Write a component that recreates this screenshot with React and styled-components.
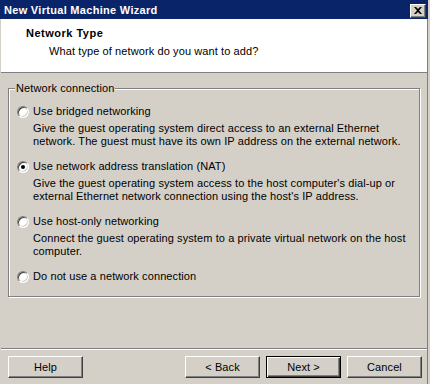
import { useState } from 'react';
import styled, { createGlobalStyle } from 'styled-components';

const GlobalStyle = createGlobalStyle`
  html, body {
    margin: 0;
    padding: 0;
    background: #d4d0c8;
  }
  body {
    font-family: "Liberation Sans", Arial, sans-serif;
    font-size: 11px;
    letter-spacing: 0.1px;
    color: #000;
  }
  * {
    box-sizing: border-box;
  }
`;

const Window = styled.div`
  width: 430px;
  height: 384px;
  padding-right: 2px;
  background: #d4d0c8;
  display: flex;
  flex-direction: column;
  overflow: hidden;
`;

const TitleBar = styled.div`
  height: 19px;
  flex: none;
  background: #0a246a;
  color: #fff;
  font-weight: 700;
  letter-spacing: 0.3px;
  line-height: 13px;
  display: flex;
  align-items: center;
  justify-content: space-between;
  padding: 2px 2px 0 4px;
`;

const CloseButton = styled.button`
  width: 16px;
  height: 14px;
  padding: 0;
  display: flex;
  align-items: center;
  justify-content: center;
  background: #d4d0c8;
  border: 1px solid;
  border-color: #fff #404040 #404040 #fff;
  box-shadow: inset -1px -1px #808080;
`;

const Client = styled.div`
  flex: 1;
  display: flex;
  flex-direction: column;
  border-left: 1px solid #d4d0c8;
  border-right: 1px solid #808080;
`;

const Header = styled.div`
  flex: none;
  background: #fff;
  padding: 8px 0 14px 25px;
  border-bottom: 1px solid #808080;
  line-height: 13px;
`;

const Heading = styled.div`
  font-weight: 700;
  letter-spacing: 0.5px;
`;

const SubHeading = styled.div`
  margin: 5px 0 0 23px;
`;

const Main = styled.div`
  flex: 1;
  padding: 9px 0 0 7px;
`;

const GroupBox = styled.fieldset`
  margin: 0;
  padding: 0;
  min-width: 0;
  width: 412px;
  border: 1px solid #808080;
  box-shadow: inset 1px 1px #fff, 1px 1px #fff;
`;

const Legend = styled.legend`
  margin-left: 6px;
  padding: 0 1px;
  line-height: 13px;
  background: #d4d0c8;
`;

const OptionList = styled.div`
  display: flex;
  flex-direction: column;
  gap: 12px;
  padding: 10px 0 13px 8px;
`;

const Option = styled.label`
  display: grid;
  grid-template-columns: 12px 1fr;
  column-gap: 4px;
  line-height: 13px;
  cursor: default;
`;

const Radio = styled.input.attrs({ type: 'radio' })`
  appearance: none;
  margin: 0;
  width: 12px;
  height: 12px;
  align-self: center;
  border-radius: 50%;
  background: #fff;
  border: 1px solid;
  border-color: #808080 #fff #fff #808080;
  box-shadow: inset 1px 1px #404040, inset -1px -1px #d4d0c8;
  display: grid;
  place-items: center;

  &:checked::after {
    content: '';
    width: 4px;
    height: 4px;
    border-radius: 50%;
    background: #000;
  }
`;

const Description = styled.div`
  grid-column: 2;
  margin-top: 4px;
  white-space: nowrap;
`;

const Line = styled.span`
  display: block;
`;

const Footer = styled.div`
  flex: none;
  display: flex;
  gap: 6px;
  padding: 7px 5px 6px 7px;
  border-top: 1px solid #808080;
  box-shadow: inset 0 1px #fff;
`;

const Button = styled.button`
  width: 75px;
  height: 22px;
  padding: 0;
  font: inherit;
  letter-spacing: inherit;
  color: #000;
  background: #d4d0c8;
  border: 1px solid;
  border-color: ${(p) => (p.$default ? '#000' : '#fff #404040 #404040 #fff')};
  box-shadow: ${(p) =>
    p.$default
      ? 'inset 1px 1px #fff, inset -1px -1px #404040, inset -2px -2px #808080'
      : 'inset -1px -1px #808080'};
  margin-left: ${(p) => (p.$push ? 'auto' : '0')};
`;

const options = [
  {
    id: 'bridged',
    label: 'Use bridged networking',
    desc: [
      'Give the guest operating system direct access to an external Ethernet',
      'network. The guest must have its own IP address on the external network.',
    ],
  },
  {
    id: 'nat',
    label: 'Use network address translation (NAT)',
    desc: [
      "Give the guest operating system access to the host computer's dial-up or",
      "external Ethernet network connection using the host's IP address.",
    ],
  },
  {
    id: 'hostonly',
    label: 'Use host-only networking',
    desc: [
      'Connect the guest operating system to a private virtual network on the host',
      'computer.',
    ],
  },
  {
    id: 'none',
    label: 'Do not use a network connection',
    desc: [],
  },
];

const CloseIcon = () => (
  <svg width="8" height="7" viewBox="0 0 8 7">
    <path d="M0 0h2l2 2 2-2h2L5 3.5 8 7H6L4 5 2 7H0l3-3.5z" fill="#000" />
  </svg>
);

export default function App() {
  const [network, setNetwork] = useState('nat');

  return (
    <>
      <GlobalStyle />
      <Window>
        <TitleBar>
          <span>New Virtual Machine Wizard</span>
          <CloseButton aria-label="Close">
            <CloseIcon />
          </CloseButton>
        </TitleBar>
        <Client>
          <Header>
            <Heading>Network Type</Heading>
            <SubHeading>What type of network do you want to add?</SubHeading>
          </Header>
          <Main>
            <GroupBox>
              <Legend>Network connection</Legend>
              <OptionList>
                {options.map((o) => (
                  <Option key={o.id}>
                    <Radio
                      name="network"
                      checked={network === o.id}
                      onChange={() => setNetwork(o.id)}
                    />
                    <span>{o.label}</span>
                    {o.desc.length > 0 && (
                      <Description>
                        {o.desc.map((line) => (
                          <Line key={line}>{line}</Line>
                        ))}
                      </Description>
                    )}
                  </Option>
                ))}
              </OptionList>
            </GroupBox>
          </Main>
          <Footer>
            <Button>Help</Button>
            <Button $push>&lt; Back</Button>
            <Button $default>Next &gt;</Button>
            <Button>Cancel</Button>
          </Footer>
        </Client>
      </Window>
    </>
  );
}
